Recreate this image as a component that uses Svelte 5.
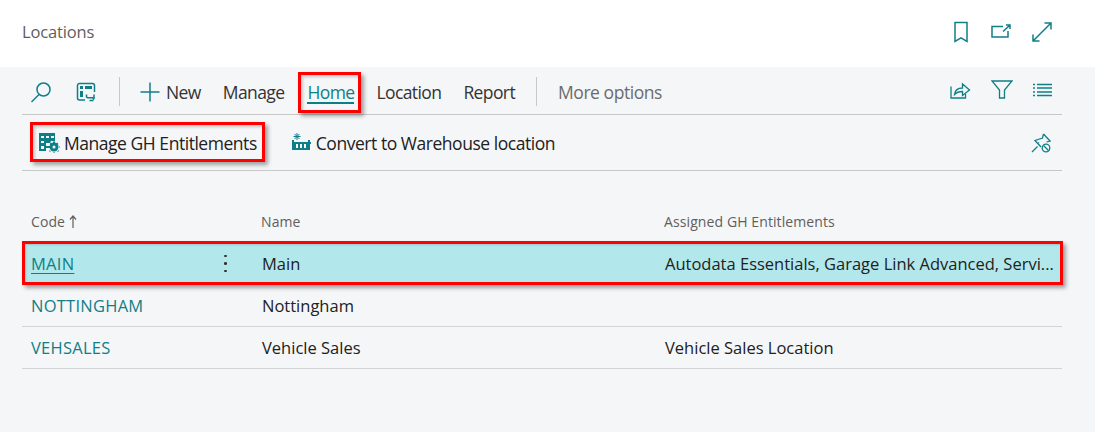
<script>
  const rows = [
    { code: 'MAIN', name: 'Main', ent: 'Autodata Essentials, Garage Link Advanced, Servi...', sel: true },
    { code: 'NOTTINGHAM', name: 'Nottingham', ent: '' },
    { code: 'VEHSALES', name: 'Vehicle Sales', ent: 'Vehicle Sales Location' }
  ];
</script>

<div class="page">
  <header class="head">
    <span class="title">Locations</span>
    <div class="head-icons">
      <svg width="18" height="22" viewBox="0 0 18 22"><path d="M3 1.500h12v19l-6-3.600-6 3.600z"/></svg>
      <svg width="20" height="18" viewBox="0 0 20 18"><path d="M12 3.500H1V14h16V8M12 8.500 18.500 2.500M15 2h4v4"/></svg>
      <svg width="20" height="20" viewBox="0 0 20 20"><path d="M1 19 19 1M12.500 1H19v6.500M1 12.500V19h6.500"/></svg>
    </div>
  </header>

  <main class="body">
    <div class="bar">
      <svg class="ic search" width="22" height="22" viewBox="0 0 22 22"><circle cx="13.500" cy="8.500" r="6.500"/><path d="M9 13.500 1.500 21"/></svg>
      <svg class="ic tell" width="20" height="20" viewBox="0 0 20 20"><path d="M9 18H3.500a2 2 0 0 1-2-2V3.500a2 2 0 0 1 2-2h13a2 2 0 0 1 2 2V10"/><path class="solid" d="M4 4h3v3H4zM9 4h7v3H9zM4 9h3v6H4z"/><path d="M10.500 12.500v2.500l1 .800h6.500v-3.300M18.500 15.500l-1.500 2M13.500 18.500h4"/></svg>
      <span class="sep"></span>
      <button class="cmd new"><svg class="ic" width="20" height="20" viewBox="0 0 20 20"><path d="M10 .5v19M.5 10h19"/></svg>New</button>
      <button class="cmd manage">Manage</button>
      <button class="cmd home">Home</button>
      <button class="cmd">Location</button>
      <button class="cmd report">Report</button>
      <span class="sep second"></span>
      <button class="cmd more">More options</button>
      <div class="bar-right">
        <svg class="ic thin" width="21" height="18" viewBox="0 0 21 18"><path d="M1 5.500V17h14.500v-4"/><path d="M4.500 13.500c.5-4 3.500-6.500 8-6.500V3l7 6-7 5.500v-4c-3.500 0-6 1-8 3z"/></svg>
        <svg class="ic thin" width="22" height="19" viewBox="0 0 22 19"><path d="M1 1h20l-7.500 9v8h-5v-8z"/></svg>
        <svg class="ic thin" width="19" height="14" viewBox="0 0 19 14"><path d="M0 1.500h2M4 1.500h15M0 5h2M4 5h15M0 9h2M4 9h15M0 12.500h2M4 12.500h15"/></svg>
      </div>
    </div>

    <div class="bar2">
      <button class="act gh">
        <svg width="22" height="21" viewBox="0 0 22 21"><path class="solid" d="M1 1h16v8h-4l-1 2H8v3h3v2H8v3H1z"/><path class="cut" d="M3 4h3v2H3zM8 4h3v2H8zM13 4h3v2h-3zM3 9h3v2H3zM3 14h3v3H3z"/><circle class="solid" cx="16" cy="15" r="4.500"/><circle class="cut" cx="16" cy="15" r="1.500"/><path class="gear" d="M16 8.500v13M9.500 15h13M11.500 10.500l9 9M20.500 10.500l-9 9"/></svg>
        Manage GH Entitlements
      </button>
      <button class="act wh">
        <svg width="20" height="18" viewBox="0 0 20 18"><path class="solid" d="M1 7h2v2h14V7h2v2h1v2h-1v6H1zM5 11v4h2v-4zM9 11v4h2v-4zM13 11v4h2v-4z"/><path class="star" d="M6 0v7M2.500 3.500h7M3.500 1l5 5M8.500 1l-5 5"/></svg>
        Convert to Warehouse location
      </button>
      <svg class="ic pin" width="20" height="20" viewBox="0 0 20 20"><path d="M12.500 1 19 8l-3.500 1M12.500 1l-1 4L4 7.500 10 14M8 9.500l-.5.500M6.500 13.500 1 19"/><circle cx="15" cy="15" r="3.800"/><path d="m12.500 12.500 5 5"/></svg>
    </div>

    <div class="grid">
      <div class="row th">
        <span class="c1">Code<svg class="arrow" width="8" height="13" viewBox="0 0 8 13"><path d="M4 13V1M1 4.500 4 1l3 3.500"/></svg></span><span class="c2">Name</span><span class="c3">Assigned GH Entitlements</span>
      </div>
      {#each rows as r}
        <div class="row td" class:sel={r.sel}>
          <span class="c1"><a href="#top" class="code">{r.code}</a>{#if r.sel}<span class="dots"><b></b><b></b><b></b></span>{/if}</span>
          <span class="c2">{r.name}</span>
          <span class="c3">{r.ent}</span>
        </div>
      {/each}
    </div>
  </main>
</div>

<style>
  :global(body) { margin: 0; background: #f5f6f8; }
  .page { width: 1095px; height: 432px; overflow: hidden; font-family: "Open Sans", "Noto Sans", sans-serif; color: #212121; background: #f5f6f8; }
  svg { fill: none; stroke: #0f7f87; stroke-width: 1.5; flex: none; }
  .thin { stroke-width: 1.3; }
  .head { height: 67px; box-sizing: border-box; background: #fff; display: flex; align-items: center; padding: 0 43px 4px 22px; }
  .title { font-size: 16.500px; letter-spacing: -0.15px; color: #605e5c; }
  .head-icons { margin-left: auto; display: flex; align-items: center; gap: 21px; }
  .body { padding: 0 33px 0 22px; }
  .bar { height: 48px; box-sizing: border-box; border-bottom: 1px solid #c8c8c8; display: flex; align-items: center; padding: 2px 10px 0 8px; }
  .sep { width: 1px; height: 29px; background: #c8c8c8; margin: 0 20px 0 23px; }
  .sep.second { margin: 0 21px 0 21px; }
  .search { margin-right: 24px; }
  button { all: unset; box-sizing: border-box; font: inherit; white-space: nowrap; }
  .cmd { font-size: 17.500px; letter-spacing: -0.6px; color: #333; display: inline-flex; align-items: center; margin-right: 22px; position: relative; height: 100%; }
  .cmd.new svg { margin-right: 6px; }
  .cmd.manage { margin-right: 23px; }
  .home { color: #0f7f87; }
  .home::before { content: ""; position: absolute; left: -9px; top: 3px; width: 63px; height: 41px; border: 3px solid #f00; box-sizing: border-box; box-shadow: 3px 3px 4px rgba(0,0,0,.35), inset 2px 2px 3px rgba(0,0,0,.2); }
  .home::after { content: ""; position: absolute; left: 0; right: 0; bottom: 10px; height: 2px; background: #0f7f87; }
  .cmd.report { margin-right: 0; }
  .more { color: #6b6b6b; margin-right: 0; letter-spacing: -0.45px; }
  .bar-right { margin-left: auto; display: flex; align-items: center; gap: 20px; margin-top: -4px; padding-left: 1px; }
  .bar2 { height: 56px; box-sizing: border-box; border-bottom: 1px solid #c8c8c8; display: flex; align-items: center; padding-left: 16px; }
  .act { font-size: 17.500px; letter-spacing: -0.46px; color: #212121; display: inline-flex; align-items: center; gap: 4px; position: relative; height: 100%; }
  .gh { margin-right: 34px; }
  .gh::before { content: ""; position: absolute; left: -8px; top: 7px; width: 235px; height: 40px; border: 3px solid #f00; box-sizing: border-box; box-shadow: 3px 3px 4px rgba(0,0,0,.35), inset 2px 2px 3px rgba(0,0,0,.2); }
  .wh { gap: 5px; }
  .wh svg { margin-top: -1px; }
  .solid { fill: #0f7f87; stroke: none; }
  .cut { fill: #f5f6f8; stroke: none; }
  .gear { stroke-width: 2; stroke-dasharray: 2 9; stroke-dashoffset: -1; }
  .star { stroke-width: 1; }
  .pin { margin-left: auto; margin-right: 11px; stroke-width: 1.3; }
  .grid { margin-top: 31px; }
  .row { display: flex; align-items: center; box-sizing: border-box; }
  .th { height: 41px; padding-bottom: 3px; font-size: 14px; letter-spacing: 0.1px; color: #605e5c; }
  .td { height: 42px; border-bottom: 1px solid #d4d4d4; font-size: 16.500px; letter-spacing: 0; color: #212121; position: relative; }
  .c1 { width: 239px; padding-left: 9px; box-sizing: border-box; position: relative; flex: none; }
  .c2 { width: 403px; flex: none; }
  .td .c2 { padding-left: 1px; box-sizing: border-box; }
  .td .c3 { padding-left: 1px; }
  .arrow { stroke: #605e5c; stroke-width: 1.2; display: inline-block; vertical-align: -1px; height: 13px; margin-left: 4px; }
  .code { color: #0f7f87; text-decoration: none; letter-spacing: .25px; }
  .sel { background: #b2e8eb; border-bottom: none; padding-bottom: 2px; }
  .sel .code { text-decoration: underline; text-underline-offset: 3px; }
  .sel::before { content: ""; position: absolute; left: 0; right: -1px; top: -2px; bottom: 0; border: 3px solid #f00; box-shadow: 3px 3px 4px rgba(0,0,0,.35), inset 1px 1px 2px rgba(0,0,0,.15); }
  .dots { position: absolute; left: 202px; top: 3px; display: flex; flex-direction: column; gap: 5px; }
  .dots b { width: 2.500px; height: 2.500px; background: #333; border-radius: 50%; }
</style>
